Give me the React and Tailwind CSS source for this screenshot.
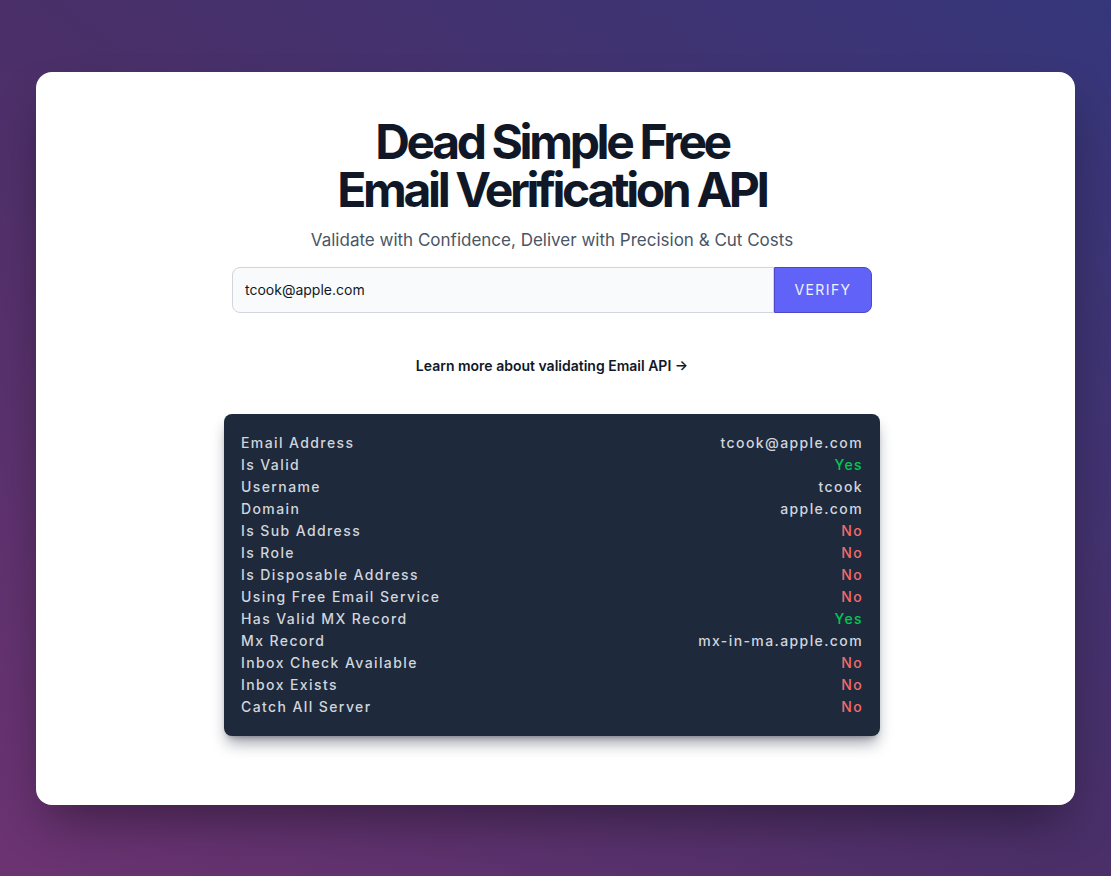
import React from 'react';

const rows = [
  { label: 'Email Address', value: 'tcook@apple.com' },
  { label: 'Is Valid', value: 'Yes' },
  { label: 'Username', value: 'tcook' },
  { label: 'Domain', value: 'apple.com' },
  { label: 'Is Sub Address', value: 'No' },
  { label: 'Is Role', value: 'No' },
  { label: 'Is Disposable Address', value: 'No' },
  { label: 'Using Free Email Service', value: 'No' },
  { label: 'Has Valid MX Record', value: 'Yes' },
  { label: 'Mx Record', value: 'mx-in-ma.apple.com' },
  { label: 'Inbox Check Available', value: 'No' },
  { label: 'Inbox Exists', value: 'No' },
  { label: 'Catch All Server', value: 'No' },
];

// colour the boolean answers, leave the rest plain
const valueClass = (value) => {
  if (value === 'Yes') return 'text-green-500';
  if (value === 'No') return 'text-[#f26b6b]';
  return 'text-gray-300';
};

export default function App() {
  return (
    <div
      className="min-h-screen flex items-center justify-center px-9 py-[71px] bg-gradient-to-bl from-[#35367b] via-[#4a2f68] to-[#6c3372]"
      style={{ fontFamily: 'Inter, "Noto Sans", sans-serif' }}
    >
      <div className="w-full bg-white rounded-2xl shadow-2xl shadow-black/40 pt-[46px] pb-[69px] pr-[7px]">
        <div className="flex flex-col items-center">
          <h1 className="text-5xl leading-[48px] font-bold tracking-[-0.07em] text-gray-900 text-center">
            Dead Simple Free
            <br />
            Email Verification API
          </h1>
          <p className="mt-[12px] text-[17px] leading-7 text-gray-600">
            Validate with Confidence, Deliver with Precision &amp; Cut Costs
          </p>

          <form className="mt-[13px] w-[640px] flex" onSubmit={(e) => e.preventDefault()}>
            <input
              type="email"
              defaultValue="tcook@apple.com"
              className="flex-1 h-[46px] px-3 text-sm text-gray-900 bg-gray-50 border border-gray-300 rounded-l-lg outline-none"
            />
            <button
              type="submit"
              className="w-[98px] h-[46px] text-sm tracking-widest text-indigo-50 bg-[#6162f8] border border-[#4f46c8] rounded-r-lg"
            >
              VERIFY
            </button>
          </form>

          <a href="#" className="mt-[43px] text-sm font-semibold text-gray-900">
            Learn more about validating Email API →
          </a>

          <div className="mt-[38px] w-[656px] bg-[#1e293b] rounded-lg shadow-lg shadow-slate-900/40 px-[17px] py-[18px]">
            {rows.map((row) => (
              <div key={row.label} className="flex justify-between text-sm leading-[22px] font-medium tracking-widest">
                <span className="text-gray-300">{row.label}</span>
                <span className={valueClass(row.value)}>{row.value}</span>
              </div>
            ))}
          </div>
        </div>
      </div>
    </div>
  );
}
